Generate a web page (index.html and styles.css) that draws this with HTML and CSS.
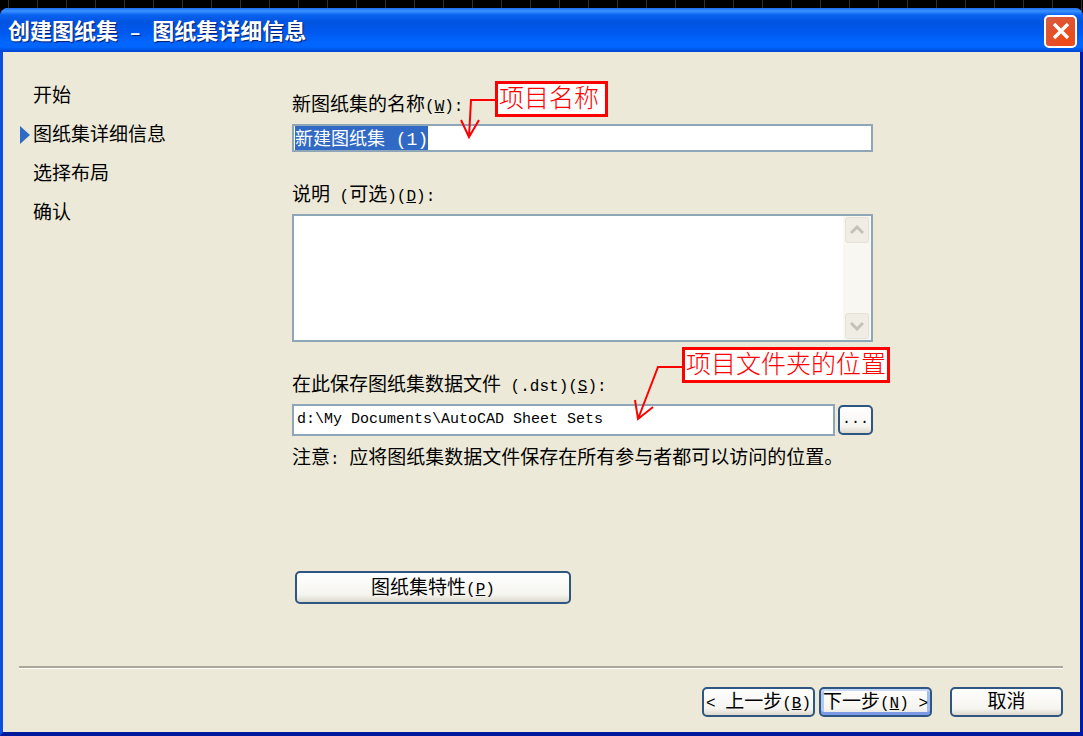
FILE: index.html
```
<!DOCTYPE html>
<html lang="zh-CN">
<head>
    <meta charset="UTF-8">
    <meta name="viewport" content="width=device-width, initial-scale=1.0">
    <title>创建图纸集 - 图纸集详细信息</title>
    <link rel="stylesheet" href="styles.css">
</head>
<body>
    <form class="window">
        <header class="titlebar">
            <h1>创建图纸集<span class="latin"> – </span>图纸集详细信息</h1>
            <button type="button" class="close" aria-label="关闭">
                <svg width="18" height="18" viewBox="0 0 18 18">
                    <path d="M2 2 L16 16 M16 2 L2 16" fill="none" stroke="#fff" stroke-width="3.4"/>
                </svg>
            </button>
        </header>

        <main class="content">
            <ol class="steps">
                <li>开始</li>
                <li class="current">图纸集详细信息</li>
                <li>选择布局</li>
                <li>确认</li>
            </ol>

            <div class="fields">
                <div class="field">
                    <label for="name">新图纸集的名称<span class="latin">(<u>W</u>):</span></label>
                    <input type="text" id="name" class="name" value="新建图纸集 (1)" autofocus>
                    <div class="callout callout-name">
                        项目名称
                        <svg width="40" height="60" viewBox="0 0 40 60">
                            <path d="M40 16 H16 L14 53 M6 36 L14 53 L24 36"/>
                        </svg>
                    </div>
                </div>

                <div class="field">
                    <label for="description">说明<span class="latin"> (</span>可选<span class="latin">)(<u>D</u>):</span></label>
                    <div class="textbox">
                        <textarea id="description"></textarea>
                        <div class="scrollbar">
                            <button type="button" aria-label="向上">
                                <svg width="14" height="10" viewBox="0 0 14 10"><path d="M1 8 L7 2 L13 8"/></svg>
                            </button>
                            <button type="button" aria-label="向下">
                                <svg width="14" height="10" viewBox="0 0 14 10"><path d="M1 2 L7 8 L13 2"/></svg>
                            </button>
                        </div>
                    </div>
                </div>

                <div class="field">
                    <label for="path">在此保存图纸集数据文件<span class="latin"> (.dst)(<u>S</u>):</span></label>
                    <div class="path-row">
                        <input type="text" id="path" class="path" value="d:\My Documents\AutoCAD Sheet Sets">
                        <button type="button" class="btn browse">...</button>
                    </div>
                    <p class="note">注意<span class="latin">: </span>应将图纸集数据文件保存在所有参与者都可以访问的位置。</p>
                    <div class="callout callout-path">
                        项目文件夹的位置
                        <svg width="55" height="75" viewBox="0 0 55 75">
                            <path d="M52 17 H28 L8 69 M5 50 L8 69 L23 57"/>
                        </svg>
                    </div>
                </div>

                <button type="button" class="btn properties">图纸集特性<span class="latin">(<u>P</u>)</span></button>
            </div>
        </main>

        <footer class="actions">
            <button type="button" class="btn"><span class="latin">&lt; </span>上一步<span class="latin">(<u>B</u>)</span></button>
            <button type="submit" class="btn default">下一步<span class="latin">(<u>N</u>) &gt;</span></button>
            <button type="button" class="btn cancel">取消</button>
        </footer>
    </form>

    <script>
        // 打开时选中名称，方便直接改写
        const nameInput = document.getElementById('name');
        nameInput.focus();
        nameInput.select();
    </script>
</body>
</html>
```

FILE: styles.css
```
* {
    margin: 0;
    padding: 0;
    box-sizing: border-box;
}

body {
    min-height: 100vh;
    display: flex;
    padding-top: 8px;
    background: repeating-linear-gradient(90deg, #000 0 8px, #2b3133 8px 9px, #000 9px 29px);
    font-family: "Liberation Sans", "Noto Sans CJK SC", sans-serif;
    font-size: 19px;
    line-height: 24px;
    color: #000;
}

button,
input,
textarea {
    font: inherit;
    color: inherit;
}

.latin {
    font-family: "Liberation Mono", monospace;
    font-size: 16px;
    line-height: 16px;
    white-space: pre;
}

.window {
    flex: 1;
    display: flex;
    flex-direction: column;
    border: solid #0a4fe0;
    border-width: 0 3px 4px;
    border-right-color: #0019b0;
    border-bottom-color: #00199c;
    border-radius: 8px 8px 0 0;
    background: #ece9d8;
}

/* 标题栏 */
.titlebar {
    display: flex;
    align-items: center;
    justify-content: space-between;
    height: 44px;
    margin: 0 -3px;
    padding: 2px 6px 0 8px;
    border-radius: 8px 8px 0 0;
    background: linear-gradient(#1c6cf0 0, #3a92ff 3px, #0a62f0 7px, #0054e0 14px, #0058ee 24px, #0066ff 34px, #0066ff 39px, #0044d0 44px);
}

.titlebar h1 {
    padding-top: 2px;
    font-size: 22px;
    line-height: 32px;
    font-weight: bold;
    color: #fff;
    text-shadow: 1px 1px 1px #0a1c6b;
}

.titlebar .latin {
    font-size: 19px;
}

.close {
    display: flex;
    align-items: center;
    justify-content: center;
    width: 33px;
    height: 33px;
    border: 2px solid #fff;
    border-radius: 5px;
    background: radial-gradient(circle at 70% 75%, #f04a14, #e2512c 55%, #d2604a);
}

/* 内容 */
.content {
    flex: 1;
    display: flex;
}

.steps {
    width: 289px;
    padding: 24px 0 0 30px;
    list-style: none;
    line-height: 39px;
}

.steps li {
    position: relative;
}

.steps .current::before {
    content: "";
    position: absolute;
    left: -13px;
    top: 11px;
    border: solid transparent;
    border-width: 9px 0 9px 10px;
    border-left-color: #316ac5;
}

.fields {
    flex: 1;
    padding: 41px 207px 0 0;
}

.field {
    position: relative;
    margin-bottom: 31px;
}

.field label {
    display: block;
    height: 24px;
    margin-bottom: 7px;
}

input,
.textbox {
    display: block;
    width: 100%;
    border: 2px solid #8ea6b8;
    background: #fff;
    outline: none;
}

.name {
    height: 28px;
    padding: 0 1px 2px;
    font-family: "Liberation Mono", "Noto Sans CJK SC", monospace;
    font-size: 18px;
    line-height: 20px;
}

.name::selection {
    background: #316ac5;
    color: #fff;
}

.textbox {
    display: flex;
    height: 128px;
}

.textbox textarea {
    flex: 1;
    border: 0;
    outline: none;
    resize: none;
    background: transparent;
}

.scrollbar {
    display: flex;
    flex-direction: column;
    justify-content: space-between;
    width: 28px;
    padding: 1px 2px;
    background: #f8f7f2;
}

.scrollbar button {
    display: flex;
    align-items: center;
    justify-content: center;
    height: 26px;
    border: 1px solid #e4e2d8;
    border-radius: 3px;
    background: #efede4;
}

.scrollbar path {
    fill: none;
    stroke: #c3c1b8;
    stroke-width: 3;
}

.path-row {
    display: flex;
    gap: 3px;
}

.path {
    flex: 1;
    height: 32px;
    padding: 0 3px 2px;
    font-family: "Liberation Mono", monospace;
    font-size: 15px;
}

.note {
    height: 24px;
    margin-top: 10px;
    white-space: nowrap;
}

/* 按钮 */
.btn {
    height: 30px;
    border: 2px solid #2f5680;
    border-radius: 5px;
    background: linear-gradient(#fff, #f5f4ef 75%, #dcd8cc);
    white-space: nowrap;
}

.browse {
    width: 35px;
    height: 30px;
    margin-top: 1px;
    font-family: "Liberation Mono", monospace;
    font-size: 15px;
}

.properties {
    width: 276px;
    height: 33px;
    margin: 70px 0 0 3px;
}

.default {
    background: linear-gradient(#fff, #f5f4ef 75%, #e4e2dc);
    box-shadow: inset 0 2px #c6d9fb, inset 0 -3px #7d9ae6, inset 3px 0 #b4c8f4, inset -3px 0 #a5bcf0;
}

.actions {
    display: flex;
    justify-content: flex-end;
    gap: 4px;
    margin: 0 17px 0 16px;
    padding: 19px 0 15px;
    border-top: 2px solid #aca899;
    box-shadow: inset 0 1px #fff;
}

.actions .btn {
    width: 113px;
}

.actions .cancel {
    margin-left: 14px;
}

/* 红色标注 */
.callout {
    position: absolute;
    z-index: 1;
    padding: 0 1px 6px;
    border: 3px solid #f00;
    background: #fff;
    color: #f00;
    font-family: "Noto Sans CJK SC", sans-serif;
    font-size: 25px;
    font-weight: 300;
    line-height: 24px;
    white-space: nowrap;
}

.callout svg {
    position: absolute;
    top: 0;
    fill: none;
    stroke: #f00;
    stroke-width: 2;
}

.callout-name {
    left: 203px;
    top: -12px;
    padding-right: 6px;
}

.callout-name svg {
    left: -43px;
}

.callout-path {
    left: 390px;
    top: -26px;
}

.callout-path svg {
    left: -55px;
}
```
